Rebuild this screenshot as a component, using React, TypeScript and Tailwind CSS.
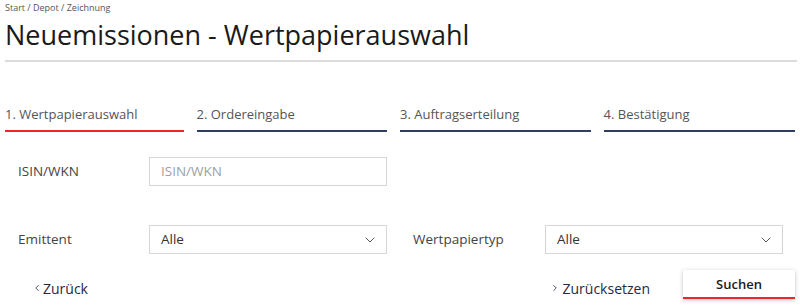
import { ChevronDown, ChevronLeft, ChevronRight } from "lucide-react";

const steps = [
  { label: "1. Wertpapierauswahl", active: true, w: "w-[179px]" },
  { label: "2. Ordereingabe", active: false, w: "w-[191px]" },
  { label: "3. Auftragserteilung", active: false, w: "w-[191px]" },
  { label: "4. Bestätigung", active: false, w: "w-[192px]" },
];

function Select({ value }: { value: string }) {
  return (
    <div className="flex h-[29px] w-[238px] items-center justify-between border border-[#d6d6d6] bg-white pl-[11px] pr-[8px] text-[13.5px] text-[#333]">
      <span>{value}</span>
      <ChevronDown className="h-4 w-4 text-[#555]" strokeWidth={1.5} />
    </div>
  );
}

export default function App() {
  return (
    <div className="h-[308px] w-[800px] overflow-hidden bg-white px-[5px] font-['Open_Sans',sans-serif]">
      <div className="pt-[2px] text-[9px] leading-[12px] text-[#555]">
        Start / Depot / Zeichnung
      </div>
      <h1 className="mt-[4px] text-[27px] leading-[34px] text-[#1a1a1a]">
        Neuemissionen - Wertpapierauswahl
      </h1>
      <div className="mt-[8px] h-[2px] w-[792px] bg-[#dcdcdc]" />

      <div className="mt-[42px] flex gap-[13px]">
        {steps.map((s) => (
          <div key={s.label} className={`${s.w} flex flex-col`}>
            <span className="text-[13px] leading-[20px] text-[#555]">{s.label}</span>
            <div
              className={`mt-[6px] h-[2px] ${s.active ? "bg-[#e52a2a]" : "bg-[#2d3e5e]"}`}
            />
          </div>
        ))}
      </div>

      <div className="mt-[25px] flex items-center">
        <span className="w-[144px] pl-[13px] text-[13.5px] text-[#444]">ISIN/WKN</span>
        <div className="flex h-[29px] w-[238px] items-center border border-[#d6d6d6] pl-[11px] text-[13.5px] text-[#a0a0a0]">
          ISIN/WKN
        </div>
      </div>

      <div className="mt-[39px] flex items-center">
        <span className="w-[144px] pl-[13px] text-[13.5px] text-[#444]">Emittent</span>
        <Select value="Alle" />
        <span className="ml-[26px] w-[132px] text-[13.5px] text-[#444]">Wertpapiertyp</span>
        <Select value="Alle" />
      </div>

      <div className="mt-[23px] flex items-center">
        <a className="ml-[27px] flex items-center gap-[1px] text-[14px] font-medium text-[#1f2a44]">
          <ChevronLeft className="h-[10px] w-[10px]" strokeWidth={2} />
          Zurück
        </a>
        <a className="ml-auto flex items-center gap-[3px] text-[14px] font-medium text-[#1f2a44]">
          <ChevronRight className="h-[10px] w-[10px]" strokeWidth={2} />
          Zurücksetzen
        </a>
        <button className="ml-[33px] mt-[-7px] h-[29px] w-[112px] border-b-2 border-[#e52a2a] bg-white pt-[3px] text-[13px] font-semibold text-[#1a1a1a] shadow-[0_1px_4px_rgba(0,0,0,0.25)]">
          Suchen
        </button>
      </div>
    </div>
  );
}
